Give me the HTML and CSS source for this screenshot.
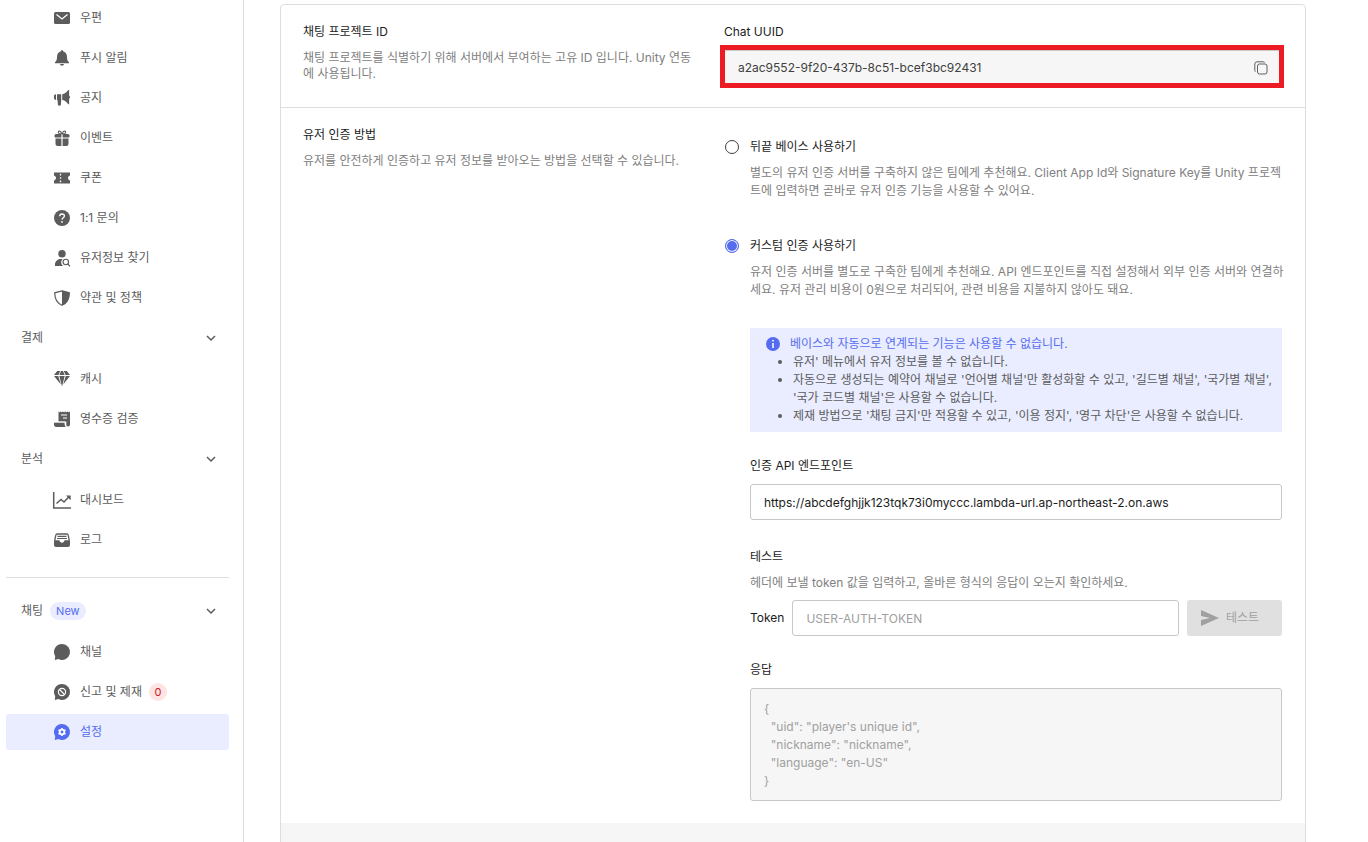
FILE: index.html
```html
<!DOCTYPE html>
<html lang="ko">
<head>
  <meta charset="UTF-8" />
  <meta name="viewport" content="width=device-width, initial-scale=1.0"/>
  <title>채팅 설정</title>
  <link rel="stylesheet" href="styles.css">
</head>
<body>
  <div class="layout">
    <nav class="sidebar">
      <ul class="menu">
        <li><a href="#" class="menu-item">
          <svg class="icon" viewBox="0 0 16 16"><rect x="0" y="2" width="16" height="12" rx="1.5" fill="currentColor"/><path d="M2.5 4.5L8 9l5.500-4.500" fill="none" stroke="#fff" stroke-width="1.200"/></svg>
          우편</a></li>
        <li><a href="#" class="menu-item">
          <svg class="icon" viewBox="0 0 16 16"><path d="M8 .3c.8 0 1.300.5 1.300 1.200C11.800 2.200 13 4.200 13 6.800c0 3 .6 4.400 2 5.500v.9H1v-.9c1.400-1.100 2-2.500 2-5.500 0-2.600 1.200-4.600 3.700-5.300C6.700.8 7.200.3 8 .3zM6 14h4c-.2 1-1 1.700-2 1.700S6.200 15 6 14z" fill="currentColor"/></svg>
          푸시 알림</a></li>
        <li><a href="#" class="menu-item">
          <svg class="icon" viewBox="0 0 16 16"><path d="M0 6.200C0 5 .8 4.300 2 4.300V10C.8 10 0 9.300 0 8zM3 4.300h4.200V10L6.800 15.500H4L3.500 10H3zM8.200 4.200c2.200-.2 4.300-1.600 6-4.200h.9v5.500c1.200.5 1.200 2.800 0 3.300v5.500h-.9c-1.700-2.600-3.800-4-6-4.200z" fill="currentColor"/></svg>
          공지</a></li>
        <li><a href="#" class="menu-item">
          <svg class="icon" viewBox="0 0 16 16"><path d="M2 4h5.400v3.500H1.500Q.5 7.500.5 6.500v-1Q.5 4 2 4zM8.600 4H14q1.500 0 1.500 1.500v1q0 1-1 1H8.600zM1.500 8.600h5.900V16H3.500q-2 0-2-2zM8.600 8.600h5.900V14q0 2-2 2H8.600z" fill="currentColor"/><path d="M7.600 3.800C5 4 4 3 4.500 1.800S7.300.8 7.600 3.800zM8.400 3.800C11 4 12 3 11.500 1.800S8.700.8 8.400 3.800z" fill="none" stroke="currentColor" stroke-width="1.100"/></svg>
          이벤트</a></li>
        <li><a href="#" class="menu-item">
          <svg class="icon" viewBox="0 0 16 16"><path d="M0 2.500h16v3c-1.300.4-2 1.300-2 2.500s.7 2.100 2 2.500v3H0v-3c1.300-.4 2-1.300 2-2.500s-.7-2.100-2-2.500z" fill="currentColor"/><path d="M6.500 3.800v1.600M6.500 7.200v1.600M6.500 10.600v1.600" stroke="#fff" stroke-width="1.300"/></svg>
          쿠폰</a></li>
        <li><a href="#" class="menu-item">
          <svg class="icon" viewBox="0 0 16 16"><circle cx="8" cy="8" r="8" fill="currentColor"/><path d="M5.700 6.300C5.700 4.800 6.700 4 8 4s2.400.8 2.400 2.100C10.400 7.800 8 7.900 8 9.800" fill="none" stroke="#fff" stroke-width="1.300"/><circle cx="8" cy="11.900" r=".9" fill="#fff"/></svg>
          1:1 문의</a></li>
        <li><a href="#" class="menu-item">
          <svg class="icon" viewBox="0 0 16 16"><circle cx="8" cy="3.800" r="3.700" fill="currentColor"/><path d="M1 16v-1.500C1 11 4 9 7 9h1.600a4.500 4.500 0 0 0 .6 7z" fill="currentColor"/><circle cx="11.800" cy="12" r="2.700" fill="none" stroke="currentColor" stroke-width="1.100"/><path d="M13.600 13.900L16 16.300" stroke="currentColor" stroke-width="1.300"/></svg>
          유저정보 찾기</a></li>
        <li><a href="#" class="menu-item">
          <svg class="icon" viewBox="0 0 16 16"><path d="M8 .8l7.300 2C15.300 9 13.500 13 8 15.300 2.500 13 .7 9 .7 2.800z" fill="none" stroke="currentColor" stroke-width="1.200"/><path d="M8 .6l7.500 2.200C15.500 9 13.500 13.300 8 15.500z" fill="currentColor"/></svg>
          약관 및 정책</a></li>
      </ul>

      <button type="button" class="menu-header">결제
        <svg class="chevron" viewBox="0 0 10 10"><path d="M1 3l4 4 4-4" fill="none" stroke="currentColor" stroke-width="1.500"/></svg>
      </button>
      <ul class="menu">
        <li><a href="#" class="menu-item">
          <svg class="icon" viewBox="0 0 16 16"><path d="M3.200 0h3L4.500 4H0zM7 0h2l1.600 4H5.400zM9.800 0h3L16 4h-4.500zM0 5h4.300l2.500 8.600zM5.300 5h5.400L8 15.500zM11.700 5H16l-6.800 8.600z" fill="currentColor"/></svg>
          캐시</a></li>
        <li><a href="#" class="menu-item">
          <svg class="icon" viewBox="0 0 16 16"><path d="M4.500.5l1 .7 1-.7 1.200.7 1.200-.7 1.200.7 1.200-.7 1.200.7 1.200-.7 1.200.7 1.100-.7v13c0 1.200-.8 2-2 2-1.200 0-1.700-.8-1.700-2V10.500H4.500z" fill="currentColor"/><path d="M0 11.500h10.500c0 2 .2 3 1.300 4.500H2.500C.8 16 0 15 0 13.500z" fill="currentColor"/><path d="M0 11h10.900" stroke="#fff" stroke-width=".8"/><path d="M7 4h6M9 7h4" stroke="#fff" stroke-width="1.200"/></svg>
          영수증 검증</a></li>
      </ul>

      <button type="button" class="menu-header">분석
        <svg class="chevron" viewBox="0 0 10 10"><path d="M1 3l4 4 4-4" fill="none" stroke="currentColor" stroke-width="1.500"/></svg>
      </button>
      <ul class="menu">
        <li><a href="#" class="menu-item">
          <svg class="icon" viewBox="0 0 16 16"><path d="M-.3 0v16H17" fill="none" stroke="currentColor" stroke-width="1.500"/><path d="M2.500 11.500L7 7.500l3 2.500 5-5.200" fill="none" stroke="currentColor" stroke-width="1.500"/><path d="M12 3.500h4.700v4.700z" fill="currentColor"/></svg>
          대시보드</a></li>
        <li><a href="#" class="menu-item">
          <svg class="icon" viewBox="0 0 16 16"><path d="M.7 8.500L1.800 3.200Q2 2 3.200 2h9.600q1.200 0 1.400 1.200l1.100 5.300" fill="none" stroke="currentColor" stroke-width="1.300"/><path d="M3.500 4.300h9M3 6.500h10" stroke="currentColor" stroke-width="1.200"/><path d="M0 8.300h5.500C5.800 11.600 10.200 11.600 10.500 8.300H16V13q0 2-2 2H2q-2 0-2-2z" fill="currentColor"/></svg>
          로그</a></li>
      </ul>

      <hr class="divider">

      <button type="button" class="menu-header">채팅 <span class="badge-new">New</span>
        <svg class="chevron" viewBox="0 0 10 10"><path d="M1 3l4 4 4-4" fill="none" stroke="currentColor" stroke-width="1.500"/></svg>
      </button>
      <ul class="menu">
        <li><a href="#" class="menu-item">
          <svg class="icon" viewBox="0 0 16 16"><path d="M8 0a8 8 0 1 1-3.600 15.100L.8 16l.4-3.800A8 8 0 0 1 8 0z" fill="currentColor"/></svg>
          채널</a></li>
        <li><a href="#" class="menu-item">
          <svg class="icon" viewBox="0 0 16 16"><path d="M8 0a8 8 0 1 1-3.600 15.100L.8 16l.4-3.800A8 8 0 0 1 8 0z" fill="currentColor"/><circle cx="8" cy="8" r="3.600" fill="none" stroke="#fff" stroke-width="1.200"/><path d="M5.500 5.500l5 5" stroke="#fff" stroke-width="1.200"/></svg>
          신고 및 제재 <span class="badge-count">0</span></a></li>
        <li><a href="#" class="menu-item active">
          <svg class="icon" viewBox="0 0 16 16"><path d="M8 0a8 8 0 1 1-3.600 15.100L.8 16l.4-3.800A8 8 0 0 1 8 0z" fill="currentColor"/><circle cx="8" cy="8" r="2.300" fill="none" stroke="#fff" stroke-width="1.800"/><path d="M8 4v1.500M8 10.500V12M4.500 6l1.400.8M10.100 9.200l1.400.8M4.500 10l1.400-.8M10.100 6.800l1.400-.8" stroke="#fff" stroke-width="1.600"/></svg>
          설정</a></li>
      </ul>
    </nav>

    <main class="content">
      <div class="card">
        <section class="row row-id">
          <div class="row-info">
            <h2 class="title">채팅 프로젝트 ID</h2>
            <p class="row-desc">채팅 프로젝트를 식별하기 위해 서버에서 부여하는 고유 ID 입니다. Unity 연동에 사용됩니다.</p>
          </div>
          <div class="row-body">
            <label class="title" for="uuid">Chat UUID</label>
            <div class="uuid-box">
              <input type="text" id="uuid" class="uuid-input" value="a2ac9552-9f20-437b-8c51-bcef3bc92431" readonly>
              <button type="button" class="copy-btn" aria-label="복사">
                <svg viewBox="0 0 14 14"><rect x="3.500" y="3" width="9.500" height="10" rx="2" fill="none" stroke="currentColor"/><path d="M1.500 10.800Q.8 10.300.8 9.500V3Q.8.800 3 .8h6.200q1 0 1.500.7" fill="none" stroke="currentColor"/></svg>
              </button>
            </div>
          </div>
        </section>

        <section class="row row-auth">
          <div class="row-info">
            <h2 class="title">유저 인증 방법</h2>
            <p class="row-desc">유저를 안전하게 인증하고 유저 정보를 받아오는 방법을 선택할 수 있습니다.</p>
          </div>
          <div class="row-body">
            <div class="option">
              <input type="radio" name="auth" id="auth-base">
              <label for="auth-base">뒤끝 베이스 사용하기</label>
              <p class="option-desc">별도의 유저 인증 서버를 구축하지 않은 팀에게 추천해요. Client App Id와 Signature Key를 Unity 프로젝트에 입력하면 곧바로 유저 인증 기능을 사용할 수 있어요.</p>
            </div>
            <div class="option">
              <input type="radio" name="auth" id="auth-custom" checked>
              <label for="auth-custom">커스텀 인증 사용하기</label>
              <p class="option-desc">유저 인증 서버를 별도로 구축한 팀에게 추천해요. API 엔드포인트를 직접 설정해서 외부 인증 서버와 연결하세요. 유저 관리 비용이 0원으로 처리되어, 관련 비용을 지불하지 않아도 돼요.</p>
            </div>

            <div class="custom">
              <div class="notice">
                <p class="notice-title">
                  <svg viewBox="0 0 14 14"><circle cx="7" cy="7" r="7" fill="currentColor"/><path d="M7 6v5" stroke="#fff" stroke-width="1.500"/><circle cx="7" cy="3.700" r=".9" fill="#fff"/></svg>
                  베이스와 자동으로 연계되는 기능은 사용할 수 없습니다.
                </p>
                <ul>
                  <li>유저' 메뉴에서 유저 정보를 볼 수 없습니다.</li>
                  <li>자동으로 생성되는 예약어 채널로 '언어별 채널'만 활성화할 수 있고, '길드별 채널', '국가별 채널', '국가 코드별 채널'은 사용할 수 없습니다.</li>
                  <li>제재 방법으로 '채팅 금지'만 적용할 수 있고, '이용 정지', '영구 차단'은 사용할 수 없습니다.</li>
                </ul>
              </div>

              <label class="title" for="endpoint">인증 API 엔드포인트</label>
              <input type="text" id="endpoint" class="field endpoint" value="https://abcdefghjjk123tqk73i0myccc.lambda-url.ap-northeast-2.on.aws">

              <h3 class="title">테스트</h3>
              <p class="test-desc">헤더에 보낼 token 값을 입력하고, 올바른 형식의 응답이 오는지 확인하세요.</p>
              <div class="token-row">
                <label for="token">Token</label>
                <input type="text" id="token" class="field" placeholder="USER-AUTH-TOKEN">
                <button type="button" class="test-btn" disabled>
                  <svg viewBox="0 0 18 16"><path d="M0 0l18 8L0 16v-6l9-2-9-2z" fill="currentColor"/></svg>
                  테스트
                </button>
              </div>

              <label class="title" for="response">응답</label>
              <textarea id="response" class="response" rows="5" readonly>{
  "uid": "player's unique id",
  "nickname": "nickname",
  "language": "en-US"
}</textarea>
            </div>
          </div>
        </section>

        <div class="card-footer"></div>
      </div>
    </main>
  </div>
</body>
</html>
```

FILE: styles.css
```css
* {
  box-sizing: border-box;
}

body {
  margin: 0;
  background: #fff;
  color: #1c1c1c;
  font-family: Inter, "Noto Sans CJK KR", sans-serif;
  font-size: 12px;
  line-height: 18px;
}

h2, h3, p, ul {
  margin: 0;
  padding: 0;
}

button, input, textarea {
  font: inherit;
  color: inherit;
}

.layout {
  display: flex;
  height: 100vh;
  overflow: hidden;
}

/* sidebar */
.sidebar {
  flex: 0 0 244px;
  padding: 0 14px 0 6px;
  border-right: 1px solid #dedede;
  color: #5c5c5c;
}

.menu {
  display: flex;
  flex-direction: column;
  gap: 4px;
  margin-bottom: 4px;
  list-style: none;
}

.menu-item {
  display: flex;
  align-items: center;
  height: 36px;
  padding-left: 48px;
  gap: 10px;
  border-radius: 3px;
  color: #5c5c5c;
  text-decoration: none;
}

.menu-item.active {
  background: #e9edff;
  color: #566cf0;
}

.icon {
  width: 16px;
  height: 16px;
  overflow: visible;
}

.menu-header {
  display: flex;
  align-items: center;
  width: 100%;
  height: 36px;
  margin-bottom: 5px;
  padding: 0 13px 0 15px;
  border: 0;
  background: none;
  cursor: pointer;
}

.chevron {
  width: 10px;
  height: 10px;
  margin-left: auto;
}

.divider {
  height: 1px;
  margin: 19px 0 15px;
  border: 0;
  background: #dedede;
}

.badge-new {
  margin-left: 7px;
  padding: 0 6px;
  border-radius: 9px;
  background: #e9edff;
  color: #566cf0;
  font-size: 11px;
}

.badge-count {
  width: 18px;
  margin-left: -3px;
  border-radius: 50%;
  background: #fde4e2;
  color: #c5221f;
  font-size: 11px;
  text-align: center;
}

/* content */
.content {
  flex: 1;
  min-width: 0;
  padding: 4px 62px 0 36px;
}

.card {
  border: 1px solid #dedede;
  border-radius: 4px;
}

.row {
  display: grid;
  grid-template-columns: 43% 57%;
  padding: 18px 23px 22px 22px;
  border-bottom: 1px solid #dedede;
}

.row-id {
  padding-bottom: 21px;
}

.row-auth {
  border-bottom: 0;
}

.row-auth .row-body {
  padding-top: 12px;
}

.row-info {
  padding-right: 28px;
}

.title {
  display: block;
  color: #1c1c1c;
  font-size: 12px;
  font-weight: 400;
}

.row-desc {
  margin-top: 9px;
  color: #808080;
  line-height: 16px;
}

.uuid-box {
  position: relative;
  display: flex;
  align-items: center;
  height: 36px;
  margin-top: 9px;
  padding: 0 13px;
  border: 1px solid #c8c8c8;
  border-radius: 3px;
  background: #f6f6f6;
}

/* red highlight over the field */
.uuid-box::after {
  content: "";
  position: absolute;
  inset: -6px -3px -3px -5px;
  border: 5px solid #ed1c24;
  pointer-events: none;
}

.uuid-input {
  flex: 1;
  padding: 0;
  border: 0;
  outline: 0;
  background: none;
  color: #404040;
}

.copy-btn {
  width: 14px;
  height: 14px;
  padding: 0;
  border: 0;
  background: none;
  color: #606060;
  cursor: pointer;
}

.copy-btn svg {
  display: block;
}

.option {
  display: grid;
  grid-template-columns: 18px 1fr;
  align-items: center;
  column-gap: 8px;
  margin-bottom: 37px;
}

.option input {
  appearance: none;
  width: 14px;
  height: 14px;
  margin: 0 0 0 1px;
  border: 1px solid #404040;
  border-radius: 50%;
}

.option input:checked {
  border-color: #566cf0;
  background: #566cf0;
  box-shadow: inset 0 0 0 1px #fff;
}

.option-desc {
  grid-column: 2;
  margin: 8px -4px 0 0;
  color: #808080;
}

.custom {
  padding-left: 26px;
}

.notice {
  margin: -8px 0 25px;
  padding: 7px 8px 7px 16px;
  background: #e9edff;
  color: #5c5c5c;
}

.notice-title {
  display: flex;
  align-items: center;
  gap: 10px;
  color: #566cf0;
}

.notice-title svg {
  width: 14px;
  height: 14px;
}

.notice ul {
  padding-left: 27px;
}

.field {
  height: 36px;
  padding: 0 13px;
  border: 1px solid #c8c8c8;
  border-radius: 3px;
  outline: 0;
  background: #fff;
  color: #1c1c1c;
}

.field::placeholder {
  color: #a0a0a0;
}

.endpoint {
  display: block;
  width: 100%;
  margin: 9px 0 28px;
}

.test-desc {
  margin: 8px 0;
  color: #808080;
}

.token-row {
  display: flex;
  align-items: center;
  gap: 8px;
  margin-bottom: 25px;
}

.token-row .field {
  flex: 1;
  min-width: 0;
}

.test-btn {
  display: flex;
  align-items: center;
  gap: 7px;
  width: 95px;
  height: 36px;
  padding: 0 14px;
  border: 0;
  border-radius: 3px;
  background: #e0e0e0;
  color: #a0a0a0;
}

.test-btn svg {
  width: 18px;
  height: 16px;
}

.response {
  display: block;
  width: 100%;
  margin-top: 9px;
  padding: 11px 13px 10px;
  border: 1px solid #c8c8c8;
  border-radius: 3px;
  outline: 0;
  background: #f6f6f6;
  color: #a0a0a0;
  resize: none;
}

.card-footer {
  height: 80px;
  background: #f6f6f6;
}
```
